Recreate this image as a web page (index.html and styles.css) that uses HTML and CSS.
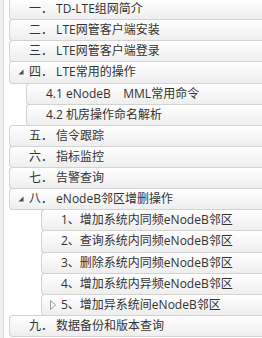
FILE: index.html
```html
<!DOCTYPE html>
<html lang="zh-CN">
<head>
<meta charset="UTF-8" />
<title>LTE操作目录</title>
<link rel="stylesheet" href="styles.css">
</head>
<body>

<!-- Дерево разделов -->
<div class="side">
  <div class="rail"></div>
  <ul class="tree">
    <li><div class="node lv1"><span class="exp"></span>一． TD-LTE组网简介</div></li>
    <li><div class="node lv1"><span class="exp"></span>二． LTE网管客户端安装</div></li>
    <li><div class="node lv1"><span class="exp"></span>三． LTE网管客户端登录</div></li>
    <li>
      <div class="node lv1"><span class="exp"><svg width="6" height="6" viewBox="0 0 6 6"><polygon points="5.5,0.5 5.5,5.5 0.5,5.5" fill="#4a4a4a"/></svg></span>四． LTE常用的操作</div>
      <ul>
        <li><div class="node lv2"><span class="exp"></span>4.1 eNodeB&nbsp;&nbsp;&nbsp;&nbsp;MML常用命令</div></li>
        <li><div class="node lv2"><span class="exp"></span>4.2 机房操作命名解析</div></li>
      </ul>
    </li>
    <li><div class="node lv1"><span class="exp"></span>五． 信令跟踪</div></li>
    <li><div class="node lv1"><span class="exp"></span>六． 指标监控</div></li>
    <li><div class="node lv1"><span class="exp"></span>七． 告警查询</div></li>
    <li>
      <div class="node lv1"><span class="exp"><svg width="6" height="6" viewBox="0 0 6 6"><polygon points="5.5,0.5 5.5,5.5 0.5,5.5" fill="#4a4a4a"/></svg></span>八． eNodeB邻区增删操作</div>
      <ul>
        <li><div class="node lv3"><span class="exp"></span>1、增加系统内同频eNodeB邻区</div></li>
        <li><div class="node lv3"><span class="exp"></span>2、查询系统内同频eNodeB邻区</div></li>
        <li><div class="node lv3"><span class="exp"></span>3、删除系统内同频eNodeB邻区</div></li>
        <li><div class="node lv3"><span class="exp"></span>4、增加系统内异频eNodeB邻区</div></li>
        <li><div class="node lv3"><span class="exp"><svg width="6" height="10" viewBox="0 0 6 10"><polygon points="0.5,0.5 5.5,5 0.5,9.5" fill="none" stroke="#9a9a9a" stroke-width="1"/></svg></span>5、增加异系统间eNodeB邻区</div></li>
      </ul>
    </li>
    <li><div class="node lv1"><span class="exp"></span>九． 数据备份和版本查询</div></li>
  </ul>
</div>

</body>
</html>
```

FILE: styles.css
```css
body {
  margin: 0;
  background: #fff;
  font-family: "Open Sans", "Noto Sans CJK SC", sans-serif;
  font-size: 12px;
  color: #333;
}
/* Боковая полоса и дерево */
.side {
  display: flex;
  height: 338px;
  overflow: hidden;
}
.rail {
  width: 3px;
  flex: none;
  background: #f0f0f0;
  border-right: 1px solid #d6d6d6;
}
.tree {
  flex: 1;
  margin: -2px 0 0;
  padding: 0;
  list-style: none;
}
.tree ul {
  margin: 0;
  padding: 0;
  list-style: none;
}
/* Кнопка узла */
.node {
  display: flex;
  align-items: center;
  box-sizing: border-box;
  height: 22.13px;
  margin-bottom: -1px;
  padding-left: 8px;
  border: 1px solid #d2d2d2;
  border-right: none;
  border-radius: 4px 0 0 4px;
  background: linear-gradient(#ffffff, #eeeeee);
  white-space: nowrap;
  line-height: 1;
}
.lv1 { margin-left: 5px; }
.lv2 { margin-left: 22px; }
.lv3 { margin-left: 37px; }
.exp {
  width: 11px;
  flex: none;
  display: flex;
  align-items: center;
}
```
